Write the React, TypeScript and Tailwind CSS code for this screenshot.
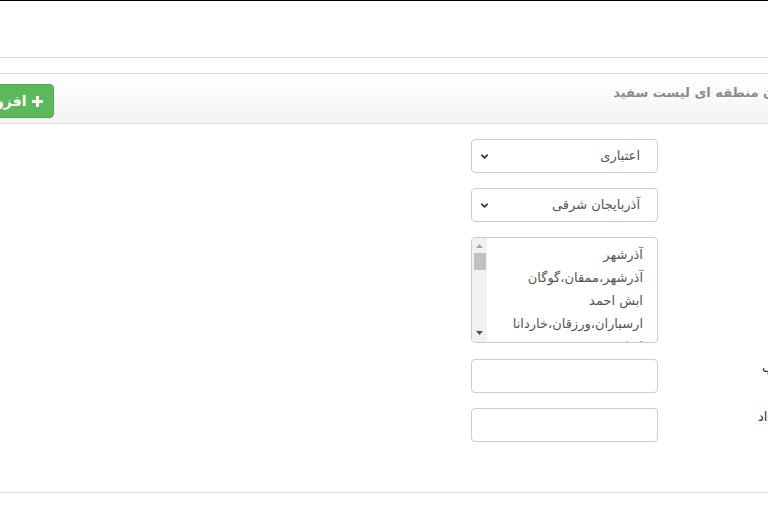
import { ChevronDown } from 'lucide-react';

// Whitelist region form — RTL admin panel, cropped to the visible window.

const cities = [
  'آذرشهر',
  'آذرشهر،ممقان،گوگان',
  'ابش احمد',
  'ارسباران،ورزقان،خاردانا',
  'اسکو',
];

function FakeSelect({ value }: { value: string }) {
  return (
    <div className="flex h-[34px] w-[187px] items-center justify-between rounded border border-[#cccccc] bg-white pr-[17px] pl-[7px] text-[13px] text-[#555]">
      <span>{value}</span>
      <ChevronDown size={11} strokeWidth={3.5} className="text-[#333]" />
    </div>
  );
}

function TextBox() {
  return <div className="h-[34px] w-[187px] rounded border border-[#cccccc] bg-white" />;
}

function Row({
  label,
  children,
  className = '',
  labelClass = 'pr-[22px]',
}: {
  label: string;
  children: React.ReactNode;
  className?: string;
  labelClass?: string;
}) {
  return (
    <div className={`flex items-start ${className}`}>
      <label className={`w-[157px] shrink-0 text-right text-[13px] leading-[18px] text-[#333] ${labelClass}`}>{label}</label>
      {children}
    </div>
  );
}

export default function App() {
  return (
    <div
      className="h-[527px] w-[768px] overflow-hidden border-t border-black bg-white"
      style={{ fontFamily: '"DejaVu Sans", sans-serif' }}
    >
      <div dir="rtl" className="ml-[-47px] w-[862px]">
        <div className="h-[57px] border-b border-[#dddddd]" />
        <div className="h-[15px]" />
        <div className="border-y border-[#dddddd]">
          <div className="flex h-[50px] items-start justify-between border-b border-[#dddddd] bg-gradient-to-b from-white to-[#f3f3f3] pr-[5px] pl-[12px]">
            <h3 className="pt-[9px] text-[13px] font-bold text-[#8c8c8c]">افزودن منطقه ای لیست سفید</h3>
            <button
              type="button"
              className="mt-[10px] flex h-[34px] items-center gap-[5px] rounded border border-[#4cae4c] bg-[#5cb85c] px-[10px] text-[14px] font-bold text-white"
            >
              <svg width="11" height="11" viewBox="0 0 11 11">
                <path d="M4 0h3v4h4v3H7v4H4V7H0V4h4z" fill="white" />
              </svg>
              <span>افزودن</span>
            </button>
          </div>
          <div className="flex h-[368px] flex-col pt-[15px]">
            <Row label="نوع">
              <FakeSelect value="اعتباری" />
            </Row>
            <Row label="محل" className="mt-[15px]">
              <FakeSelect value="آذربایجان شرقی" />
            </Row>
            <Row label="شهر" className="mt-[15px]">
              <div className="flex h-[106px] w-[187px] overflow-hidden rounded border border-[#cccccc] bg-white">
                <div className="flex-1 overflow-hidden pt-[5px] pr-[14px] text-right text-[13px] leading-[23px] text-[#555]">
                  {cities.map((c) => (
                    <div key={c}>{c}</div>
                  ))}
                </div>
                <div className="flex w-[15px] shrink-0 flex-col items-center bg-[#f1f1f1] py-[3px]">
                  <svg width="7" height="4" viewBox="0 0 7 4" className="mt-[3px]">
                    <path d="M0 4L3.5 0L7 4z" fill="#a3a3a3" />
                  </svg>
                  <div className="mt-[5px] h-[17px] w-[12px] bg-[#c1c1c1]" />
                  <div className="flex-1" />
                  <svg width="7" height="4" viewBox="0 0 7 4" className="mb-[4px]">
                    <path d="M0 0L3.5 4L7 0z" fill="#505050" />
                  </svg>
                </div>
              </div>
            </Row>
            <Row label="ترتیب" className="mt-[16px]">
              <TextBox />
            </Row>
            <Row label="تعداد" className="mt-[15px]" labelClass="pr-[31px]">
              <TextBox />
            </Row>
          </div>
        </div>
      </div>
    </div>
  );
}
